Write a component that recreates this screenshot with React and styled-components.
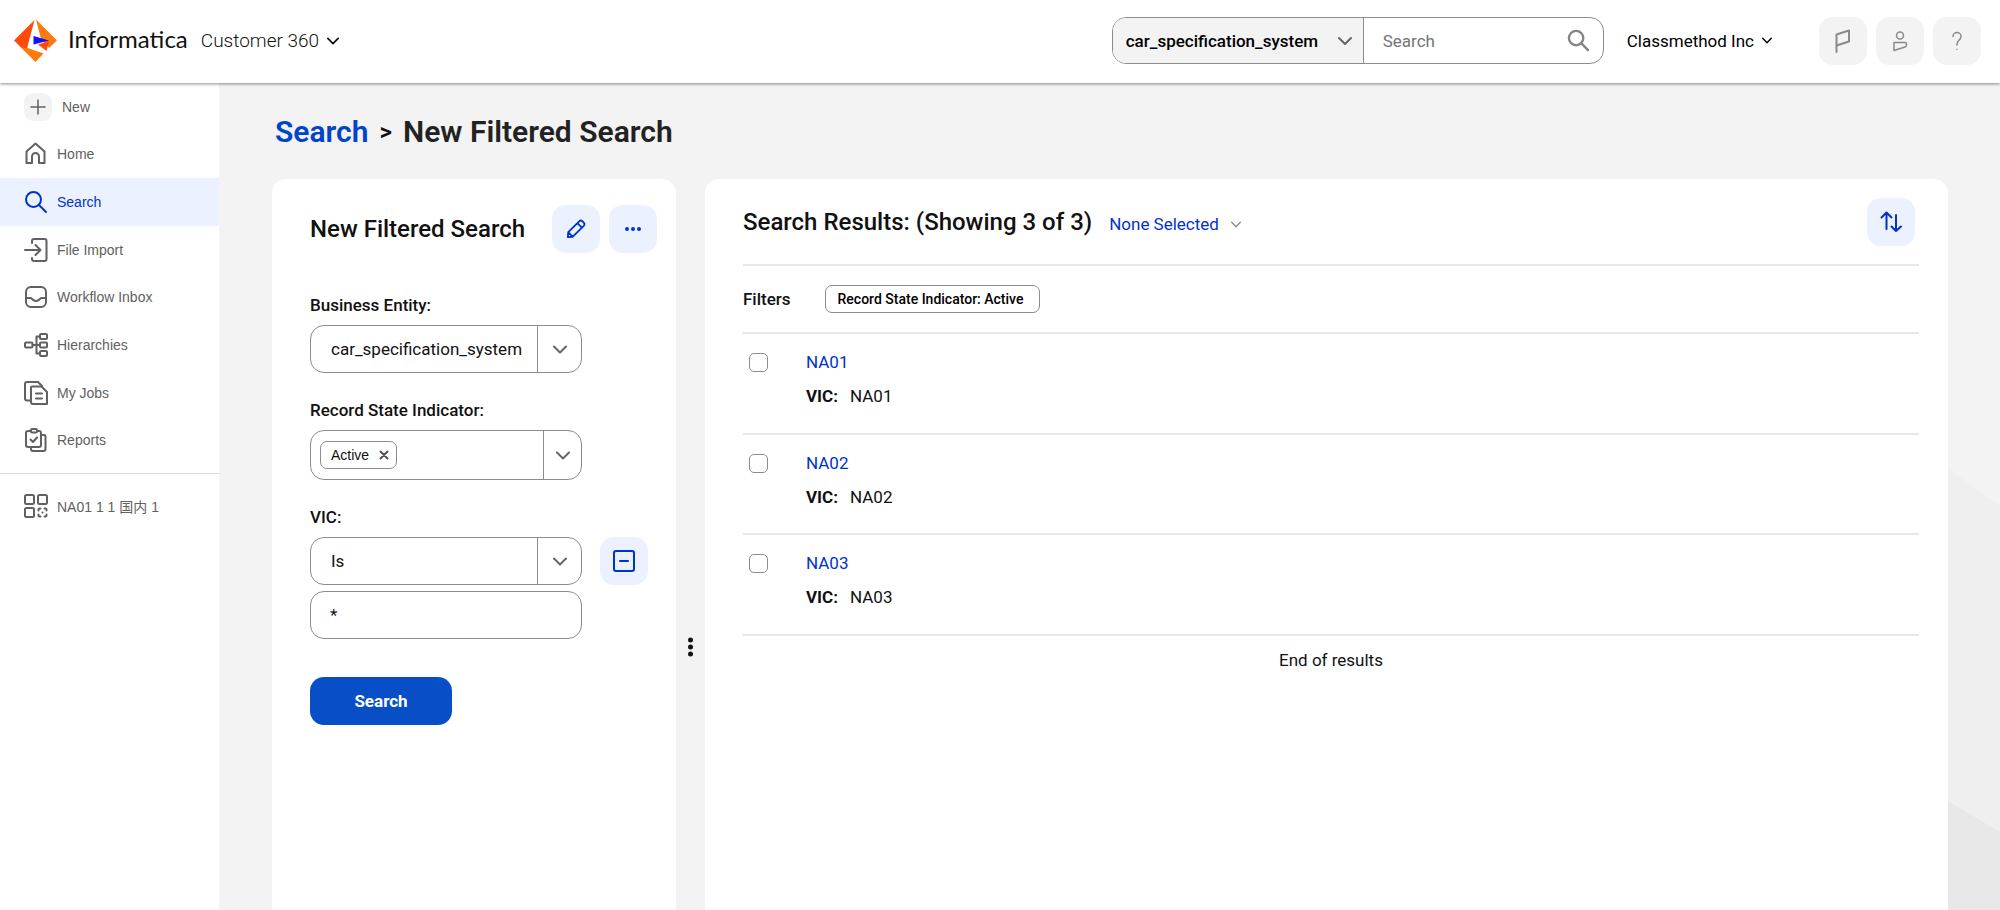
import React, { useState } from "react";
import styled, { createGlobalStyle } from "styled-components";

const GlobalStyle = createGlobalStyle`
  * {
    box-sizing: border-box;
  }
  body {
    margin: 0;
    background-color: #f3f3f3;
    color: #111;
    font-family: Roboto, "Noto Sans CJK JP", sans-serif;
    font-size: 17px;
  }
  button,
  input,
  select {
    font: inherit;
    color: inherit;
  }
  a {
    color: #0033cc;
    text-decoration: none;
  }
`;

const Page = styled.div`
  display: flex;
  flex-direction: column;
  min-height: 100vh;
`;
const Icon = styled.svg.attrs({ fill: "none", "aria-hidden": true })`
  display: block;
  flex: none;
  stroke: currentColor;
  stroke-width: ${(p) => p.$weight || 2};
  stroke-linecap: round;
  stroke-linejoin: round;
`;

/* header */
const Header = styled.header`
  position: relative;
  display: flex;
  align-items: center;
  height: 83px;
  padding: 0 19px 2px 14px;
  background-color: #fff;
  box-shadow: 0 1px 3px rgba(0, 0, 0, 0.45);
`;
const Brand = styled.a`
  display: flex;
  align-items: center;
  gap: 11px;
  color: #111;
  font-family: Lato, sans-serif;
  font-size: 24px;
`;
const BrandName = styled.span`
  padding-bottom: 4px;
`;
const PlainButton = styled.button`
  display: flex;
  align-items: center;
  gap: 8px;
  padding: 0;
  border: 0;
  background: none;
  cursor: pointer;
`;
const AppSwitch = styled(PlainButton)`
  margin-left: 13px;
  color: #111;
  font-size: 19px;
  font-weight: 300;
`;
const SearchBar = styled.form`
  display: flex;
  height: 47px;
  width: 492px;
  margin-left: auto;
  border: 1px solid #8c8c8c;
  border-radius: 14px;
  overflow: hidden;
`;
const ScopeWrap = styled.div`
  position: relative;
  width: 251px;
  border-right: 1px solid #8c8c8c;
  background-color: #f3f3f3;
`;
const ScopeSelect = styled.select`
  appearance: none;
  width: 100%;
  height: 100%;
  padding: 0 36px 0 13px;
  border: 0;
  background: none;
  color: #000;
  font-weight: 500;
`;
const ScopeArrow = styled.span`
  position: absolute;
  right: 11px;
  top: 50%;
  transform: translateY(-50%);
  color: #666;
  pointer-events: none;
`;
const SearchInput = styled.input`
  flex: 1;
  min-width: 0;
  padding: 0 19px;
  border: 0;
  &::placeholder {
    color: #757575;
    opacity: 1;
  }
`;
const SearchSubmit = styled(PlainButton)`
  padding: 0 13px;
  color: #858585;
`;
const OrgButton = styled(PlainButton)`
  margin: 0 47px 0 23px;
  color: #000;
`;
const HeaderTools = styled.div`
  display: flex;
  gap: 9px;
`;
const SquareButton = styled.button`
  display: flex;
  flex: none;
  align-items: center;
  justify-content: center;
  width: 48px;
  height: 48px;
  padding: 0;
  border: 0;
  border-radius: 14px;
  background-color: ${(p) => (p.$blue ? "#ebf1fe" : "#f3f3f3")};
  color: ${(p) => (p.$blue ? "#0033cc" : "#8a8a8a")};
  font-size: 24px;
  cursor: pointer;
`;

/* sidebar */
const Body = styled.div`
  display: flex;
  flex: 1;
`;
const Sidebar = styled.nav`
  flex: none;
  width: 219px;
  background-color: #fff;
  font-family: "Liberation Sans", "Noto Sans CJK JP", sans-serif;
  font-size: 14px;
`;
const Menu = styled.ul`
  display: grid;
  grid-auto-rows: 1fr;
  height: 381px;
  margin: 0;
  padding: 0;
  list-style: none;
`;
const MenuLink = styled.a`
  display: flex;
  align-items: center;
  gap: 9px;
  height: 100%;
  padding-left: 24px;
  background-color: ${(p) => (p.$active ? "#ebf1fe" : "transparent")};
  color: ${(p) => (p.$active ? "#0033cc" : "#616161")};
`;
const NewLink = styled(MenuLink)`
  gap: 10px;
`;
const PlusBox = styled.span`
  display: flex;
  align-items: center;
  justify-content: center;
  width: 28px;
  height: 28px;
  border-radius: 9px;
  background-color: #f3f3f3;
`;
const Recent = styled.div`
  height: 64px;
  margin-top: 9px;
  border-top: 1px solid #ddd;
`;

/* content */
const Main = styled.main`
  position: relative;
  display: flex;
  flex: 1;
  flex-direction: column;
  min-width: 0;
  padding: 29px 52px 0 53px;
`;
const Backdrop = styled.svg`
  position: absolute;
  right: 0;
  bottom: 0;
`;
const Breadcrumb = styled.h1`
  display: flex;
  gap: 11px;
  margin: 0 0 27px 3px;
  color: #222;
  font-size: 30px;
  font-weight: 600;
  line-height: 40px;
`;
const Crumb = styled.a`
  color: #0044cc;
`;
const Separator = styled.span`
  color: #111;
  font-size: 24px;
`;
const Panels = styled.div`
  position: relative;
  display: flex;
  flex: 1;
`;
const Card = styled.section`
  background-color: #fff;
  border-radius: 14px 14px 0 0;
`;
const FilterCard = styled(Card)`
  flex: none;
  width: 404px;
  padding: 26px 19px 38px 38px;
`;
const CardHead = styled.div`
  display: flex;
  align-items: center;
  gap: 9px;
`;
const CardTitle = styled.h2`
  flex: ${(p) => (p.$grow ? 1 : "none")};
  margin: 0;
  color: #111;
  font-size: 24px;
  font-weight: 500;
  line-height: 32px;
`;
const Field = styled.div`
  margin-top: ${(p) => p.$top || 25}px;
`;
const Label = styled.label`
  display: block;
  margin-bottom: 8px;
  font-weight: 500;
  line-height: 24px;
`;
const FieldRow = styled.div`
  display: flex;
  gap: 18px;
`;
const SelectWrap = styled.div`
  position: relative;
  width: 272px;
`;
const Select = styled.select`
  appearance: none;
  width: 100%;
  height: 48px;
  padding: 0 50px 0 20px;
  border: 1px solid #8c8c8c;
  border-radius: 14px;
  background-color: #fff;
`;
const SelectArrow = styled.span`
  position: absolute;
  top: 0;
  right: 0;
  display: flex;
  align-items: center;
  justify-content: center;
  width: 45px;
  height: 100%;
  border-left: 1px solid #8c8c8c;
  color: #666;
  pointer-events: none;
`;
const TagBox = styled.div`
  display: flex;
  align-items: center;
  width: 272px;
  height: 50px;
  padding-left: 9px;
  border: 1px solid #8c8c8c;
  border-radius: 14px;
  overflow: hidden;
`;
const Tag = styled.span`
  display: flex;
  align-items: center;
  gap: 10px;
  height: 28px;
  padding: 0 7px 0 10px;
  border: 1px solid #8c8c8c;
  border-radius: 7px;
  font-family: "Liberation Sans", sans-serif;
  font-size: 14px;
`;
const TagRemove = styled(PlainButton)`
  color: #555;
`;
const TagInput = styled.input`
  flex: 1;
  min-width: 0;
  border: 0;
  outline: 0;
`;
const TagArrow = styled(PlainButton)`
  justify-content: center;
  width: 38px;
  height: 100%;
  border-left: 1px solid #8c8c8c;
  color: #666;
`;
const TextInput = styled.input`
  width: 272px;
  height: 48px;
  margin-top: 6px;
  padding: 0 19px;
  border: 1px solid #8c8c8c;
  border-radius: 14px;
`;
const PrimaryButton = styled.button`
  width: 142px;
  height: 48px;
  margin-top: 38px;
  border: 0;
  border-radius: 14px;
  background-color: #084fc7;
  color: #fff;
  font-weight: 700;
  cursor: pointer;
`;
const Splitter = styled.div`
  display: flex;
  flex: none;
  align-items: flex-start;
  justify-content: center;
  width: 29px;
  padding-top: 458px;
`;

/* results */
const ResultCard = styled(Card)`
  flex: 1;
  min-width: 0;
  padding: 19px 29px 38px 38px;
`;
const ResultHead = styled.div`
  display: flex;
  align-items: center;
  height: 68px;
  padding: 0 4px 18px 0;
  border-bottom: 2px solid #e8e8e8;
`;
const Selection = styled(PlainButton)`
  gap: 12px;
  margin: 4px auto 0 17px;
  color: #0033cc;
`;
const Filters = styled.div`
  display: flex;
  align-items: center;
  gap: 34px;
  height: 68px;
  border-bottom: 2px solid #e8e8e8;
  font-weight: 500;
`;
const FilterChip = styled.span`
  padding: 0 16px 0 12px;
  border: 1px solid #8c8c8c;
  border-radius: 7px;
  color: #000;
  font-size: 14px;
  line-height: 26px;
`;
const Results = styled.ul`
  display: grid;
  grid-auto-rows: 1fr;
  min-height: 302px;
  margin: 0;
  padding: 0;
  list-style: none;
`;
const Result = styled.li`
  display: flex;
  gap: 38px;
  padding: 18px 6px 0;
  border-bottom: 2px solid #e8e8e8;
`;
const Checkbox = styled.input.attrs({ type: "checkbox" })`
  appearance: none;
  flex: none;
  width: 19px;
  height: 19px;
  margin: 1px 0 0;
  border: 1px solid #8c8c8c;
  border-radius: 5px;
  background-color: #fff;
  &:checked {
    background-color: #084fc7;
  }
`;
const ResultText = styled.div`
  line-height: 20px;
`;
const Detail = styled.dl`
  display: flex;
  gap: 12px;
  margin: 14px 0 0;
  dt {
    font-weight: 700;
  }
  dd {
    margin: 0;
  }
`;
const EndNote = styled.p`
  margin: 14px 0 0;
  line-height: 20px;
  text-align: center;
`;

const Chevron = ({ width = 14, weight = 2 }) => (
  <Icon width={width} height={width / 2 + 2} viewBox="0 0 14 9" $weight={weight}>
    <path d="M1 1.5l6 6 6-6" />
  </Icon>
);

const Logo = () => (
  <svg width="43" height="43" viewBox="0 0 43 43" aria-hidden="true">
    <path fill="#ff4a0d" d="M0 21.5L20.5 1 13 29.5 8 29.5z" />
    <path fill="#ff7a0d" d="M7 28.5L13.5 29 29.5 34.5 21.5 43z" />
    <path fill="#ff7a0d" d="M22 0.5L43 21.5 35 29 27 20z" />
    <path fill="#ff4a0d" d="M24 25.5L35 22 32.5 32z" />
    <path fill="#1010ff" d="M19.5 17L35 21.5 19.5 25.5z" />
  </svg>
);

const icons = {
  home: <path d="M2.5 9.5L11.5 1.5l9 8V21h-5.5v-6.5a3.5 3.5 0 0 0-7 0V21H2.5z" />,
  search: (
    <>
      <circle cx="9.5" cy="9.5" r="7.5" />
      <path d="M15 15l7 7" />
    </>
  ),
  import: <path d="M8 5V3a2 2 0 0 1 2-2h10.500a2 2 0 0 1 2 2v18a2 2 0 0 1-2 2H10a2 2 0 0 1-2-2v-1M1 12h15.500M11.500 7l5 5-5 5" />,
  inbox: (
    <>
      <rect x="2" y="2" width="20" height="20" rx="5" />
      <path d="M2 13h4.500c1.500 0 2 3 5.500 3s4-3 5.500-3H22" />
    </>
  ),
  hierarchy: (
    <>
      <rect x="1" y="9.5" width="7.5" height="5" rx="1" />
      <rect x="16" y="1" width="7" height="5" rx="1" />
      <rect x="16" y="9.5" width="7" height="5" rx="1" />
      <rect x="16" y="18" width="7" height="5" rx="1" />
      <path d="M8.500 12H16M16 3.500h-3.500v17H16" />
    </>
  ),
  jobs: (
    <>
      <path d="M6 19.500H3a2 2 0 0 1-2-2V3a2 2 0 0 1 2-2h11l4 4" />
      <path d="M8 5.500h9.500L23 11v12H9a2 2 0 0 1-2-2V6.500a1 1 0 0 1 1-1zM12 12.500h6M12 17.500h6" />
    </>
  ),
  reports: (
    <>
      <path d="M7 3H4a2 2 0 0 0-2 2v12a2 2 0 0 0 2 2h11a2 2 0 0 0 2-2V5a2 2 0 0 0-2-2h-2" />
      <rect x="7" y="1" width="6" height="3.5" rx="1" />
      <path d="M6.500 11.500l2.500 2.500 4-4.500M18.500 7H20a1.500 1.500 0 0 1 1.500 1.500V21a2 2 0 0 1-2 2H9a2 2 0 0 1-2-2v-.5" />
    </>
  ),
  record: (
    <>
      <rect x="1" y="1" width="9" height="9" rx="1.5" />
      <rect x="14" y="1" width="9" height="9" rx="1.5" />
      <rect x="1" y="14" width="9" height="9" rx="1.5" />
      <path d="M14.500 16.500v-1a1 1 0 0 1 1-1h1M20.500 14.500h1a1 1 0 0 1 1 1v1M22.500 20.500v1a1 1 0 0 1-1 1h-1M16.500 22.500h-1a1 1 0 0 1-1-1v-1M18.500 18.500h.1" />
    </>
  ),
};

const MenuIcon = ({ name }) => (
  <Icon width="24" height="24" viewBox="0 0 24 24">
    {icons[name]}
  </Icon>
);

const menu = [
  { icon: "home", text: "Home" },
  { icon: "search", text: "Search", active: true },
  { icon: "import", text: "File Import" },
  { icon: "inbox", text: "Workflow Inbox" },
  { icon: "hierarchy", text: "Hierarchies" },
  { icon: "jobs", text: "My Jobs" },
  { icon: "reports", text: "Reports" },
];

const records = ["NA01", "NA02", "NA03"];

const TopBar = () => (
  <Header>
    <Brand href="#">
      <Logo />
      <BrandName>Informatica</BrandName>
    </Brand>
    <AppSwitch type="button">
      Customer 360
      <Chevron width={12} />
    </AppSwitch>
    <SearchBar onSubmit={(e) => e.preventDefault()}>
      <ScopeWrap>
        <ScopeSelect aria-label="Search in">
          <option>car_specification_system</option>
        </ScopeSelect>
        <ScopeArrow>
          <Chevron />
        </ScopeArrow>
      </ScopeWrap>
      <SearchInput placeholder="Search" aria-label="Search" />
      <SearchSubmit aria-label="Run search">
        <Icon width="23" height="23" viewBox="0 0 24 24" $weight={2.5}>
          {icons.search}
        </Icon>
      </SearchSubmit>
    </SearchBar>
    <OrgButton type="button">
      Classmethod Inc
      <Chevron width={10} />
    </OrgButton>
    <HeaderTools>
      <SquareButton aria-label="Announcements">
        <Icon width="24" height="24" viewBox="0 0 24 24">
          <path d="M5.500 23V5.500L18 1.500v11L5.500 16.500" />
        </Icon>
      </SquareButton>
      <SquareButton aria-label="Account">
        <Icon width="24" height="24" viewBox="0 0 24 24" $weight={1.5}>
          <circle cx="12" cy="6.5" r="3.5" />
          <path d="M6 13.500h11a1.500 1.500 0 0 1 1.500 1.500v1a2 2 0 0 1-1.500 2L6 21.500z" />
        </Icon>
      </SquareButton>
      <SquareButton aria-label="Help">
        <Icon width="24" height="24" viewBox="0 0 24 24" $weight={1.5}>
          <path d="M8 7.500a4 4 0 1 1 8 0c0 3.500-4 4-4 7.500v1M12 20.200v.1" />
        </Icon>
      </SquareButton>
    </HeaderTools>
  </Header>
);

const FilterPanel = () => {
  const [tags, setTags] = useState(["Active"]);
  return (
    <FilterCard>
      <CardHead>
        <CardTitle $grow>New Filtered Search</CardTitle>
        <SquareButton $blue aria-label="Edit">
          <Icon width="20" height="20" viewBox="0 0 22 22">
            <path d="M2 20l.5-5.500L14.500 2.500a2.500 2.500 0 0 1 3.500 0l1.500 1.500a2.500 2.500 0 0 1 0 3.500L7.500 19.500zM12.500 4.500l5 5M3 15l4 4" />
          </Icon>
        </SquareButton>
        <SquareButton $blue aria-label="More">
          <svg width="16" height="4" viewBox="0 0 16 4" fill="currentColor">
            <circle cx="2" cy="2" r="2" />
            <circle cx="8" cy="2" r="2" />
            <circle cx="14" cy="2" r="2" />
          </svg>
        </SquareButton>
      </CardHead>
      <Field $top={40}>
        <Label htmlFor="entity">Business Entity:</Label>
        <SelectWrap>
          <Select id="entity">
            <option>car_specification_system</option>
          </Select>
          <SelectArrow>
            <Chevron />
          </SelectArrow>
        </SelectWrap>
      </Field>
      <Field>
        <Label htmlFor="state">Record State Indicator:</Label>
        <TagBox>
          {tags.map((tag) => (
            <Tag key={tag}>
              {tag}
              <TagRemove aria-label={`Remove ${tag}`} onClick={() => setTags([])}>
                <Icon width="10" height="10" viewBox="0 0 10 10">
                  <path d="M1.500 1.500l7 7M8.500 1.500l-7 7" />
                </Icon>
              </TagRemove>
            </Tag>
          ))}
          <TagInput id="state" />
          <TagArrow aria-label="Show states">
            <Chevron />
          </TagArrow>
        </TagBox>
      </Field>
      <Field>
        <Label htmlFor="vic">VIC:</Label>
        <FieldRow>
          <SelectWrap>
            <Select id="vic">
              <option>Is</option>
            </Select>
            <SelectArrow>
              <Chevron />
            </SelectArrow>
          </SelectWrap>
          <SquareButton $blue aria-label="Remove VIC">
            <Icon width="22" height="22" viewBox="0 0 22 22">
              <rect x="1" y="1" width="20" height="20" rx="2" />
              <path d="M7 11h8" />
            </Icon>
          </SquareButton>
        </FieldRow>
        <TextInput aria-label="VIC value" defaultValue="*" />
      </Field>
      <PrimaryButton>Search</PrimaryButton>
    </FilterCard>
  );
};

const ResultPanel = () => (
  <ResultCard>
    <ResultHead>
      <CardTitle>Search Results: (Showing 3 of 3)</CardTitle>
      <Selection>
        None Selected
        <Icon width="10" height="7" viewBox="0 0 14 9" color="#8c8c8c">
          <path d="M1 1.500l6 6 6-6" />
        </Icon>
      </Selection>
      <SquareButton $blue aria-label="Sort">
        <Icon width="24" height="24" viewBox="0 0 24 24">
          <path d="M7.500 19V3M2.500 7.500l5-5 5 5M17 5v16M12.500 16.500l4.500 4.500 5-4.500" />
        </Icon>
      </SquareButton>
    </ResultHead>
    <Filters>
      Filters
      <FilterChip>Record State Indicator: Active</FilterChip>
    </Filters>
    <Results>
      {records.map((id) => (
        <Result key={id}>
          <Checkbox aria-label={`Select ${id}`} />
          <ResultText>
            <a href="#">{id}</a>
            <Detail>
              <dt>VIC:</dt>
              <dd>{id}</dd>
            </Detail>
          </ResultText>
        </Result>
      ))}
    </Results>
    <EndNote>End of results</EndNote>
  </ResultCard>
);

const App = () => {
  return (
    <Page>
      <GlobalStyle />
      <TopBar />
      <Body>
        <Sidebar>
          <Menu>
            <li>
              <NewLink href="#">
                <PlusBox>
                  <Icon width="16" height="16" viewBox="0 0 16 16" $weight={1.5}>
                    <path d="M8 1v14M1 8h14" />
                  </Icon>
                </PlusBox>
                New
              </NewLink>
            </li>
            {menu.map((item) => (
              <li key={item.text}>
                <MenuLink href="#" $active={item.active}>
                  <MenuIcon name={item.icon} />
                  {item.text}
                </MenuLink>
              </li>
            ))}
          </Menu>
          <Recent>
            <MenuLink href="#">
              <MenuIcon name="record" />
              NA01 1 1 国内 1
            </MenuLink>
          </Recent>
        </Sidebar>
        <Main>
          <Backdrop width="52" height="441" viewBox="0 0 52 441" aria-hidden="true">
            <path fill="#efefef" d="M0 0l52 37v404H0z" />
            <path fill="#e8e8e8" d="M0 332l52 31v78H0z" />
          </Backdrop>
          <Breadcrumb>
            <Crumb href="#">Search</Crumb>
            <Separator>&gt;</Separator>
            New Filtered Search
          </Breadcrumb>
          <Panels>
            <FilterPanel />
            <Splitter>
              <svg width="5" height="20" viewBox="0 0 5 20" fill="#111">
                <circle cx="2.5" cy="3" r="2.5" />
                <circle cx="2.5" cy="10" r="2.5" />
                <circle cx="2.5" cy="17" r="2.5" />
              </svg>
            </Splitter>
            <ResultPanel />
          </Panels>
        </Main>
      </Body>
    </Page>
  );
};

export default App;
